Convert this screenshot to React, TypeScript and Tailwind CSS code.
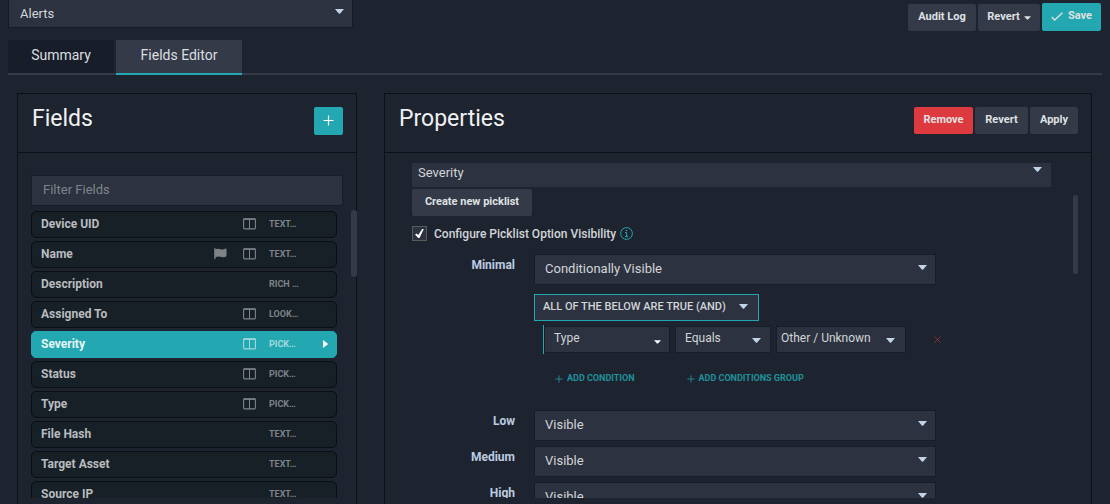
import React, { useState } from "react";

const font = "font-['Roboto','Liberation_Sans',sans-serif]";

function Caret({ className = "" }: { className?: string }) {
  return (
    <svg viewBox="0 0 9 5" className={`pointer-events-none h-[5px] w-[9px] fill-current ${className}`} aria-hidden="true">
      <path d="M0 0h9L5.2 4.4a1 1 0 0 1-1.4 0z" />
    </svg>
  );
}

function SmallCaret({ className = "" }: { className?: string }) {
  return (
    <svg viewBox="0 0 7 4" className={`pointer-events-none h-[4px] w-[7px] fill-current ${className}`} aria-hidden="true">
      <path d="M0 .3h7L4 3.4a.8.8 0 0 1-1 0z" />
    </svg>
  );
}

function ColumnsIcon() {
  return (
    <svg viewBox="0 0 13 12" className="h-3 w-[13px]" fill="none" stroke="currentColor" aria-hidden="true">
      <rect x=".6" y=".9" width="11.8" height="10" rx=".8" strokeWidth="1.1" />
      <path d="M.8 1.2h11.4" strokeWidth="1.3" />
      <path d="M6.5 1v10" strokeWidth="1" />
    </svg>
  );
}

function FlagIcon() {
  return (
    <svg viewBox="0 0 13 12" className="h-3 w-[13px] fill-current" aria-hidden="true">
      <path d="M.2.8C.2.4.500.1.9.1s.7.300.7.7v.5c2.200-1.200 3.700-.3 5.300.1 1.700.4 3 0 4.700-.8.500-.2.900 0 .9.500v6.700c0 .3-.2.500-.400.600-1.300.7-2.600 1-4.200.6-2-.6-3.700-1-6.300.1v1.600c0 .3-.3.500-.700.500s-.7-.2-.7-.5z" />
    </svg>
  );
}

function PlusIcon({ className = "" }: { className?: string }) {
  return (
    <svg viewBox="0 0 11 11" className={className} fill="none" stroke="currentColor" aria-hidden="true">
      <path d="M5.500.5v10M.5 5.500h10" strokeWidth="1.200" />
    </svg>
  );
}

type PickProps = {
  label: string;
  id?: string;
  options: string[];
  wrap: string;
  look: string;
  caret: string;
  small?: boolean;
};

function Pick({ label, id, options, wrap, look, caret, small }: PickProps) {
  return (
    <div className={`relative ${wrap}`}>
      <select
        id={id}
        aria-label={id ? undefined : label}
        className={`block w-full appearance-none bg-[#2c323f] text-[#d3d5d8] outline-none ${look}`}
      >
        {options.map((o) => (
          <option key={o}>{o}</option>
        ))}
      </select>
      {small ? (
        <SmallCaret className={`absolute text-white ${caret}`} />
      ) : (
        <Caret className={`absolute text-[#c3d3e8] ${caret}`} />
      )}
    </div>
  );
}

const fields = [
  { name: "Device UID", kind: "TEXT…", column: true },
  { name: "Name", kind: "TEXT…", column: true, flag: true },
  { name: "Description", kind: "RICH …" },
  { name: "Assigned To", kind: "LOOK…", column: true },
  { name: "Severity", kind: "PICK…", column: true },
  { name: "Status", kind: "PICK…", column: true },
  { name: "Type", kind: "PICK…", column: true },
  { name: "File Hash", kind: "TEXT…" },
  { name: "Target Asset", kind: "TEXT…" },
  { name: "Source IP", kind: "TEXT…" },
];

const button = "flex items-center justify-center rounded-[2px] bg-[#343a47] text-[11px] font-bold text-[#dfe1e3] pb-px";
const optionSelect = "h-[31px] border border-[#181e27] pl-2.5 pr-8 pb-px text-[13px]";
const panelHeader = "flex h-[59px] shrink-0 items-start justify-between border-b border-[#0b0f16] pl-[14px] pr-[13px] pt-[13px]";
const panelTitle = "text-[23px] leading-6 text-[#f0f1f2]";

function FieldsPanel() {
  const [selected, setSelected] = useState("Severity");
  return (
    <section className="flex min-h-0 flex-col border border-b-0 border-[#0b0f16]">
      <header className={panelHeader}>
        <h2 className={panelTitle}>Fields</h2>
        <button aria-label="Add field" className="flex h-7 w-[29px] items-center justify-center rounded-[2px] bg-[#23a7b1] pb-px text-white">
          <PlusIcon className="h-[11px] w-[11px]" />
        </button>
      </header>
      <div className="flex min-h-0 flex-1 flex-col px-[13px] pt-[22px]">
        <input
          aria-label="Filter Fields"
          placeholder="Filter Fields"
          className="h-[31px] w-full shrink-0 border border-[#181e27] bg-[#2c323f] px-[11px] pb-0.5 text-[13px] text-[#d3d5d8] outline-none placeholder:text-[#80838a]"
        />
        <div className="relative mt-[5px] min-h-0 flex-1">
          <ul className="mr-1.5 flex h-full flex-col gap-[3px] overflow-hidden">
            {fields.map((f) => {
              const on = f.name === selected;
              return (
                <li key={f.name} className="shrink-0">
                  <button
                    onClick={() => setSelected(f.name)}
                    className={`flex h-[27px] w-full items-center rounded-[5px] border pb-0.5 pl-[9px] pr-2 text-left ${
                      on ? "border-[#23a7b1] bg-[#23a7b1] text-[#e6f5f6]" : "border-[#0b0e12] bg-[#171f27] text-[#b9bcbf]"
                    }`}
                  >
                    <span className="flex-1 text-[12px] font-bold">{f.name}</span>
                    <span className={`flex items-center ${on ? "text-[#a3dade]" : "text-[#7e8388]"}`}>
                      {f.flag && <FlagIcon />}
                      <span className="ml-4 w-[13px]">{f.column && <ColumnsIcon />}</span>
                      <span className="ml-[13px] w-[54px] pt-0.5 text-[9px] font-bold">{f.kind}</span>
                    </span>
                    <span className="w-[5px]">
                      {on && (
                        <svg viewBox="0 0 5 8" className="h-2 w-[5px] fill-white" aria-hidden="true">
                          <path d="M0 0l4.600 3.500a.6.6 0 0 1 0 1L0 8z" />
                        </svg>
                      )}
                    </span>
                  </button>
                </li>
              );
            })}
          </ul>
          <div className="absolute -right-[14px] -top-px h-[67px] w-1.5 rounded-[3px] bg-[#343a47]" />
        </div>
      </div>
    </section>
  );
}

function OptionRow({ name, options, children }: { name: string; options: string[]; children?: React.ReactNode }) {
  const id = `option-${name.toLowerCase()}`;
  return (
    <div className="flex gap-[19px]">
      <label htmlFor={id} className="w-[103px] shrink-0 pt-[3px] text-right text-[12px] font-bold leading-4 text-[#bccbe0]">
        {name}
      </label>
      <div className="max-w-[402px] flex-1">
        <Pick label={name} id={id} options={options} wrap="" look={optionSelect} caret="right-[9px] top-[11px]" />
        {children}
      </div>
    </div>
  );
}

function Conditions() {
  const add = "flex items-center gap-1 text-[9px] font-bold text-[#229099]";
  return (
    <div className="pb-[19px]">
      <Pick
        label="Condition logic"
        options={["ALL OF THE BELOW ARE TRUE (AND)", "ANY OF THE BELOW ARE TRUE (OR)"]}
        wrap="mt-[9px] w-[225px]"
        look="h-[27px] border border-[#23a7b1] pl-2 pb-px text-[11px] font-medium"
        caret="right-[11px] top-[10px]"
      />
      <div className="mt-1 ml-[9px] flex items-center">
        <div className="border-l border-[#23a7b1] py-px">
          <Pick
            label="Field"
            options={["Type", "Status"]}
            wrap="w-[126px]"
            look="h-[27px] border border-[#181e27] pl-[9px] pb-[3px] text-[12px]"
            caret="right-[9px] top-[14px]"
            small
          />
        </div>
        <Pick
          label="Operator"
          options={["Equals", "Not equals"]}
          wrap="ml-[5px] w-24 shrink-0"
          look="h-[27px] border border-[#181e27] pl-[9px] pb-[3px] text-[12px]"
          caret="right-[10px] top-[12px]"
        />
        <Pick
          label="Value"
          options={["Other / Unknown", "Malware"]}
          wrap="ml-[5px] w-[130px] shrink-0"
          look="h-[27px] border border-[#181e27] pl-[4px] pb-[3px] text-[12px]"
          caret="right-[11px] top-[12px]"
        />
        <button aria-label="Remove condition" className="ml-7 shrink-0 pb-px text-[#a8323a]">
          <svg viewBox="0 0 7 7" className="h-[7px] w-[7px]" fill="none" stroke="currentColor" aria-hidden="true">
            <path d="M.5.5l6 6M6.500.5l-6 6" strokeWidth=".8" />
          </svg>
        </button>
      </div>
      <div className="mt-[18px] ml-[21px] flex h-[14px] gap-[52px]">
        <button className={add}>
          <PlusIcon className="h-2 w-2" />
          ADD CONDITION
        </button>
        <button className={add}>
          <PlusIcon className="h-2 w-2" />
          ADD CONDITIONS GROUP
        </button>
      </div>
    </div>
  );
}

function PropertiesPanel() {
  return (
    <section className="flex min-h-0 flex-col border border-b-0 border-[#0b0f16]">
      <header className={panelHeader}>
        <h2 className={panelTitle}>Properties</h2>
        <div className="flex gap-0.5">
          <button className={`${button} h-[27px] w-[59px] bg-[#dc3a3f]!`}>Remove</button>
          <button className={`${button} h-[27px] w-[53px]`}>Revert</button>
          <button className={`${button} h-[27px] w-12`}>Apply</button>
        </div>
      </header>
      <div className="relative min-h-0 flex-1">
        <div className="h-full overflow-hidden pl-[27px] pr-10 pt-[10px]">
          <Pick
            label="Picklist"
            options={["Severity", "Status"]}
            wrap=""
            look="h-6 pl-1.5 pb-[6px] text-[13px]"
            caret="right-[9px] top-[4px]"
          />
          <button className={`${button} mt-0.5 h-[27px] w-[120px]`}>Create new picklist</button>
          <div className="mt-[10px] flex h-[15px] items-center">
            <label className="flex items-center gap-[7px] text-[12px] font-medium text-[#d3d5d8]">
              <span className="relative block h-[15px] w-[15px]">
                <input
                  type="checkbox"
                  defaultChecked
                  className="peer block h-[15px] w-[15px] appearance-none border border-[#5b5a58] bg-[#2c323f]"
                />
                <svg
                  viewBox="0 0 9 9"
                  className="pointer-events-none absolute left-[3px] top-[3px] hidden h-[9px] w-[9px] fill-white peer-checked:block"
                  aria-hidden="true"
                >
                  <path d="M0 5.500l1.700-.9 1.500 1.300L7.200 0h1.600L4.500 9H3.200z" />
                </svg>
              </span>
              Configure Picklist Option Visibility
            </label>
            <svg viewBox="0 0 13 13" className="ml-1 h-[13px] w-[13px] text-[#23a7b1]" fill="none" stroke="currentColor" aria-hidden="true">
              <circle cx="6.500" cy="6.500" r="5.900" strokeWidth="1" />
              <path d="M5 5.500h1.600v4M4.900 9.600h3.300" strokeWidth="1" />
              <circle cx="6.400" cy="3.500" r=".8" fill="currentColor" stroke="none" />
            </svg>
          </div>
          <div className="mt-[13px] flex flex-col gap-[5px]">
            <OptionRow name="Minimal" options={["Conditionally Visible", "Visible", "Hidden"]}>
              <Conditions />
            </OptionRow>
            <OptionRow name="Low" options={["Visible", "Hidden"]} />
            <OptionRow name="Medium" options={["Visible", "Hidden"]} />
            <OptionRow name="High" options={["Visible", "Hidden"]} />
          </div>
        </div>
        <div className="absolute right-[13px] top-[42px] h-[79px] w-[5px] rounded-[2px] bg-[#343a47]" />
      </div>
    </section>
  );
}

export default function App() {
  return (
    <div className={`flex h-screen flex-col overflow-hidden bg-[#1d2430] pb-1.5 ${font}`}>
      <div className="flex h-10 shrink-0 items-start justify-between pl-2 pr-[9px]">
        <Pick
          label="Module"
          options={["Alerts", "Cases"]}
          wrap="w-[345px]"
          look="h-7 border border-t-0 border-[#161c25] pl-[11px] text-[13px]"
          caret="right-[9px] top-[9px]"
        />
        <div className="flex items-end gap-0.5 pt-[3px]">
          <button className={`${button} h-[27px] w-[68px]`}>Audit Log</button>
          <button className={`${button} h-[27px] w-[62px] gap-1`}>
            Revert
            <SmallCaret className="mt-0.5" />
          </button>
          <button className={`${button} h-7 w-[59px] gap-[5px] bg-[#23a7b1]!`}>
            <svg viewBox="0 0 12 9" className="h-[9px] w-3" fill="none" stroke="currentColor" aria-hidden="true">
              <path d="M.7 5l3 3L11.400.8" strokeWidth="1.400" />
            </svg>
            Save
          </button>
        </div>
      </div>

      <nav className="mx-2 flex h-[35px] shrink-0 gap-0.5 border-b-2 border-[#343a47] text-[14px] text-[#dcdee0]">
        <a href="#summary" className="flex h-[33px] w-[106px] items-center justify-center bg-[#171e29] pb-[3px]">
          Summary
        </a>
        <a
          href="#fields"
          aria-current="page"
          className="flex h-[35px] w-[126px] items-center justify-center border-b-2 border-[#23a7b1] bg-[#343a47] pb-[3px]"
        >
          Fields Editor
        </a>
      </nav>

      <main className="mt-[18px] -mb-1.5 grid min-h-0 flex-1 grid-cols-[340fr_708fr] gap-[27px] pl-[17px] pr-[18px] [&>section]:pb-1.5">
        <FieldsPanel />
        <PropertiesPanel />
      </main>
    </div>
  );
}
